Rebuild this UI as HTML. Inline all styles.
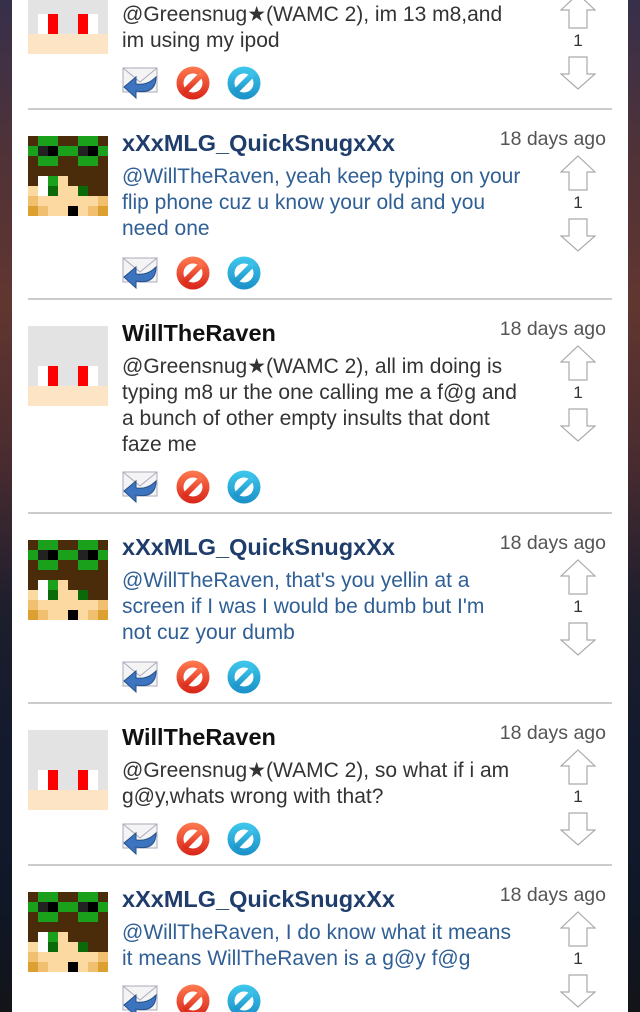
<!DOCTYPE html>
<html><head><meta charset="utf-8"><style>
*{margin:0;padding:0;box-sizing:border-box}
body{width:640px;height:1012px;overflow:hidden;position:relative;font-family:"Liberation Sans",Helvetica,Arial,sans-serif;
background:linear-gradient(180deg,#37304a 0%,#4f3238 15%,#613630 30%,#4a2c30 45%,#1e1e2c 60%,#121a2c 75%,#101828 88%,#121418 100%)}
#panel{position:absolute;left:12px;top:0;width:616px;height:1012px;background:#fff;overflow:hidden}
.post{position:absolute;left:0;width:616px}
.av{position:absolute;left:16px;top:0;width:80px;height:80px}
.name{position:absolute;left:110px;top:-7px;font-weight:bold;font-size:23.5px;color:#1f3d6b;line-height:28px;white-space:nowrap}
.name.k{color:#111}
.body{position:absolute;left:110px;top:28px;font-size:21px;line-height:26px;color:#2f5f95;width:420px;white-space:nowrap}
.body.k{color:#333}
.time{position:absolute;right:22px;top:-9px;font-size:19.5px;color:#555;line-height:24px}
.up{position:absolute;left:548px;top:19px}
.num{position:absolute;left:548px;top:55px;width:36px;text-align:center;font-size:17px;color:#333;line-height:24px}
.dn{position:absolute;left:548px;top:82px}
.ic{position:absolute;left:110px;width:170px;height:36px}
.sep{position:absolute;left:16px;width:584px;height:2px;background:#cbcbcb}
</style></head><body>
<svg width="0" height="0" style="position:absolute">
<defs>
<g id="snug">
<rect width="8" height="8" fill="#4a2c0a"/>
<rect x="1" y="0" width="2" height="3" fill="#1aa01a"/><rect x="5" y="0" width="2" height="3" fill="#1aa01a"/>
<rect x="0" y="1" width="8" height="1" fill="#1aa01a"/>
<rect x="1" y="1" width="1" height="1" fill="#222"/><rect x="2" y="1" width="1" height="1" fill="#000"/>
<rect x="5" y="1" width="1" height="1" fill="#222"/><rect x="6" y="1" width="1" height="1" fill="#000"/>
<rect x="3" y="4" width="1" height="1" fill="#fcd9a0"/>
<rect x="1" y="4" width="1" height="2" fill="#fff"/><rect x="2" y="4" width="1" height="1" fill="#1aa01a"/>
<rect x="0" y="5" width="1" height="1" fill="#fcd9a0"/><rect x="2" y="5" width="1" height="1" fill="#0a6a0a"/>
<rect x="3" y="5" width="2" height="1" fill="#fcd9a0"/><rect x="5" y="5" width="1" height="1" fill="#0a6a0a"/>
<rect x="0" y="6" width="8" height="1" fill="#fcd9a0"/><rect x="0" y="6" width="1" height="1" fill="#f0c070"/><rect x="7" y="6" width="1" height="1" fill="#f0c070"/>
<rect x="0" y="7" width="8" height="1" fill="#fcd9a0"/><rect x="0" y="7" width="1" height="1" fill="#dca030"/><rect x="1" y="7" width="1" height="1" fill="#f0c070"/>
<rect x="6" y="7" width="1" height="1" fill="#f0c070"/><rect x="7" y="7" width="1" height="1" fill="#dca030"/><rect x="4" y="7" width="1" height="1" fill="#000"/>
</g>
<g id="will">
<rect width="8" height="8" fill="#e3e3e3"/>
<rect x="1" y="4" width="1" height="2" fill="#fff"/><rect x="2" y="4" width="1" height="2" fill="#f00"/>
<rect x="5" y="4" width="1" height="2" fill="#f00"/><rect x="6" y="4" width="1" height="2" fill="#fff"/>
<rect x="0" y="6" width="8" height="2" fill="#fde4c4"/>
</g>
<g id="up"><path d="M18 1 L35 17 L27 17 L27 35 L9 35 L9 17 L1 17 Z" fill="#fff" stroke="#aaa" stroke-width="1.2"/></g>
<g id="dn"><path d="M9 1 L27 1 L27 18 L35 18 L18 33 L1 18 L9 18 Z" fill="#fff" stroke="#aaa" stroke-width="1.2"/></g>
<linearGradient id="rg" x1="0" y1="0" x2="0" y2="1"><stop offset="0" stop-color="#ff7a50"/><stop offset="1" stop-color="#d82418"/></linearGradient>
<linearGradient id="bg" x1="0" y1="0" x2="0" y2="1"><stop offset="0" stop-color="#40c8ec"/><stop offset="1" stop-color="#1a90c8"/></linearGradient>
<g id="icons">
<rect x="1" y="3" width="34" height="24" fill="#f4f4f4" stroke="#aab" stroke-width="1"/>
<path d="M1 3 L18 17 L35 3" fill="none" stroke="#aab" stroke-width="1"/>
<path d="M34 12 C34 26 24 28 14 26 L14 33 L2 22 L14 12 L14 19 C22 20 28 18 34 12 Z" fill="#3d74c0" stroke="#24508a" stroke-width="1"/>
<circle cx="71" cy="18" r="16.5" fill="url(#rg)"/>
<circle cx="71" cy="18" r="9.5" fill="#fff"/>
<path d="M60 25 L78 7 L82 11 L64 29 Z" fill="url(#rg)"/>
<circle cx="122" cy="18" r="16.5" fill="url(#bg)"/>
<circle cx="122" cy="18" r="9.5" fill="#fff"/>
<path d="M111 25 L129 7 L133 11 L115 29 Z" fill="url(#bg)"/>
</g>
</defs></svg>
<div id="panel">

<div class="post" style="top:-26px">
<svg class="av" viewBox="0 0 8 8" shape-rendering="crispEdges"><use href="#will"/></svg>
<div class="body k" style="top:28px">@Greensnug★(WAMC 2), im 13 m8,and<br>im using my ipod</div>
<svg class="up" width="36" height="36"><use href="#up"/></svg>
<div class="num">1</div>
<svg class="dn" width="36" height="36"><use href="#dn"/></svg>
<svg class="ic" style="top:91px"><use href="#icons"/></svg>
<div class="sep" style="top:134px"></div>
</div>

<div class="post" style="top:136px">
<svg class="av" viewBox="0 0 8 8" shape-rendering="crispEdges"><use href="#snug"/></svg>
<div class="name">xXxMLG_QuickSnugxXx</div>
<div class="time">18 days ago</div>
<div class="body">@WillTheRaven, yeah keep typing on your<br>flip phone cuz u know your old and you<br>need one</div>
<svg class="up" width="36" height="36"><use href="#up"/></svg>
<div class="num">1</div>
<svg class="dn" width="36" height="36"><use href="#dn"/></svg>
<svg class="ic" style="top:119px"><use href="#icons"/></svg>
<div class="sep" style="top:162px"></div>
</div>

<div class="post" style="top:326px">
<svg class="av" viewBox="0 0 8 8" shape-rendering="crispEdges"><use href="#will"/></svg>
<div class="name k">WillTheRaven</div>
<div class="time">18 days ago</div>
<div class="body k">@Greensnug★(WAMC 2), all im doing is<br>typing m8 ur the one calling me a f@g and<br>a bunch of other empty insults that dont<br>faze me</div>
<svg class="up" width="36" height="36"><use href="#up"/></svg>
<div class="num">1</div>
<svg class="dn" width="36" height="36"><use href="#dn"/></svg>
<svg class="ic" style="top:143px"><use href="#icons"/></svg>
<div class="sep" style="top:186px"></div>
</div>

<div class="post" style="top:540px">
<svg class="av" viewBox="0 0 8 8" shape-rendering="crispEdges"><use href="#snug"/></svg>
<div class="name">xXxMLG_QuickSnugxXx</div>
<div class="time">18 days ago</div>
<div class="body">@WillTheRaven, that's you yellin at a<br>screen if I was I would be dumb but I'm<br>not cuz your dumb</div>
<svg class="up" width="36" height="36"><use href="#up"/></svg>
<div class="num">1</div>
<svg class="dn" width="36" height="36"><use href="#dn"/></svg>
<svg class="ic" style="top:119px"><use href="#icons"/></svg>
<div class="sep" style="top:162px"></div>
</div>

<div class="post" style="top:730px">
<svg class="av" viewBox="0 0 8 8" shape-rendering="crispEdges"><use href="#will"/></svg>
<div class="name k">WillTheRaven</div>
<div class="time">18 days ago</div>
<div class="body k">@Greensnug★(WAMC 2), so what if i am<br>g@y,whats wrong with that?</div>
<svg class="up" width="36" height="36"><use href="#up"/></svg>
<div class="num">1</div>
<svg class="dn" width="36" height="36"><use href="#dn"/></svg>
<svg class="ic" style="top:91px"><use href="#icons"/></svg>
<div class="sep" style="top:134px"></div>
</div>

<div class="post" style="top:892px">
<svg class="av" viewBox="0 0 8 8" shape-rendering="crispEdges"><use href="#snug"/></svg>
<div class="name">xXxMLG_QuickSnugxXx</div>
<div class="time">18 days ago</div>
<div class="body">@WillTheRaven, I do know what it means<br>it means WillTheRaven is a g@y f@g</div>
<svg class="up" width="36" height="36"><use href="#up"/></svg>
<div class="num">1</div>
<svg class="dn" width="36" height="36"><use href="#dn"/></svg>
<svg class="ic" style="top:91px"><use href="#icons"/></svg>
</div>

</div>
</body></html>
